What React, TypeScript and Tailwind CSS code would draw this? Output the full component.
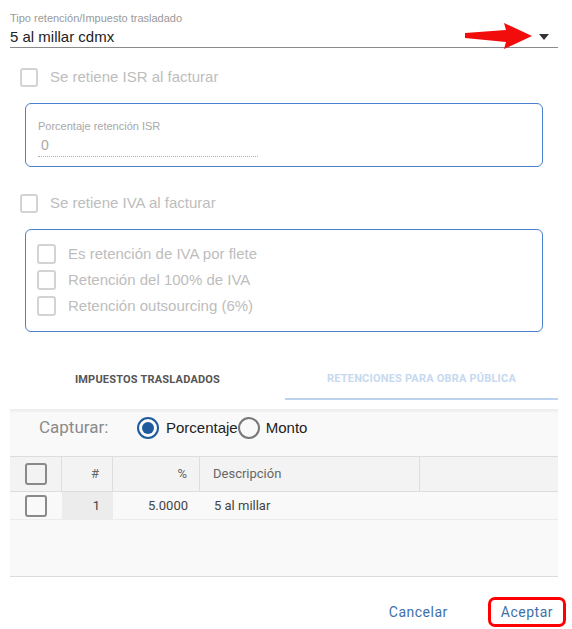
import React from "react";

const Box = ({ className = "", color = "border-[#d3d3d3]" }: { className?: string; color?: string }) => (
	<span className={`inline-block rounded-[3px] border-2 ${color} ${className}`} />
);

const CheckRow = ({ label }: { label: string }) => (
	<div className="flex items-center h-[26px]">
		<Box className="w-[19px] h-[20px]" />
		<span className="ml-[12px] text-[15px] text-[#bdbdbd]">{label}</span>
	</div>
);

const App = () => {
	return (
		<div className="w-[572px] h-[629px] bg-white font-['Liberation_Sans',Arial,sans-serif] relative overflow-hidden">
			{/* select */}
			<div className="pt-[12px] ml-[10px] w-[548px]">
				<div className="text-[11px] leading-[13px] text-[#9a9a9a]">Tipo retención/Impuesto trasladado</div>
				<div className="flex items-center justify-between border-b border-[#8a8a8a] h-[23px] pt-[2px]">
					<span className="text-[15px] text-[#222]">5 al millar cdmx</span>
					<svg width="12" height="8" viewBox="0 0 12 8" className="mr-[8px]">
						<path d="M1 1 L11 1 L6 7 Z" fill="#333" />
					</svg>
				</div>
			</div>
			{/* red arrow annotation */}
			<svg className="absolute left-[464px] top-[22px]" width="70" height="28" viewBox="0 0 70 28">
				<path d="M1 11 L42 8 L40 1 L68 14 L40 27 L42 20 L1 16 Z" fill="#f20d0d" />
			</svg>

			{/* ISR */}
			<div className="pl-[20px] mt-[18px] flex items-center h-[22px]">
				<Box className="w-[18px] h-[19px]" />
				<span className="ml-[12px] text-[15px] text-[#bdbdbd]">Se retiene ISR al facturar</span>
			</div>
			<div className="ml-[25px] mt-[15px] w-[518px] h-[64px] border border-[#4a7fcc] rounded-[6px] pl-[12px] pt-[16px]">
				<div className="text-[11px] leading-[12px] text-[#a8a8a8]">Porcentaje retención ISR</div>
				<div className="w-[220px] border-b border-dotted border-[#b0b0b0] pl-[3px] text-[14px] leading-[22px] text-[#a8a8a8] mt-[2px]">0</div>
			</div>

			{/* IVA */}
			<div className="pl-[20px] mt-[25px] flex items-center h-[22px]">
				<Box className="w-[18px] h-[19px]" />
				<span className="ml-[12px] text-[15px] text-[#bdbdbd]">Se retiene IVA al facturar</span>
			</div>
			<div className="ml-[25px] mt-[15px] w-[518px] h-[103px] border border-[#4a7fcc] rounded-[6px] pl-[11px] pt-[11px]">
				<CheckRow label="Es retención de IVA por flete" />
				<CheckRow label="Retención del 100% de IVA" />
				<CheckRow label="Retención outsourcing (6%)" />
			</div>

			{/* tabs */}
			<div className="mt-[28px] ml-[10px] w-[548px] flex font-['Roboto',sans-serif] font-bold text-[11px] tracking-[0.2px]">
				<div className="w-[275px] h-[40px] flex items-center justify-center text-[#555]">IMPUESTOS TRASLADADOS</div>
				<div className="flex-1 h-[40px] flex items-center justify-center text-[#c6d9f0] border-b-2 border-[#bdd2ed]">
					RETENCIONES PARA OBRA PÚBLICA
				</div>
			</div>

			{/* panel */}
			<div className="ml-[10px] w-[548px] h-[168px] mt-[9px] bg-[#f9f9f9] border-t border-[#ececec] border-b border-b-[#dcdcdc] shadow-[inset_0_2px_2px_rgba(0,0,0,0.04)]">
				<div className="flex items-center h-[36px] pl-[29px]">
					<span className="font-['Roboto',sans-serif] text-[17px] text-[#8a8a8a] w-[98px]">Capturar:</span>
					<span className="w-[22px] h-[22px] rounded-full border-2 border-[#1e5a9c] flex items-center justify-center">
						<span className="w-[12px] h-[12px] rounded-full bg-[#1e5a9c]" />
					</span>
					<span className="ml-[7px] text-[15px] text-[#222]">Porcentaje</span>
					<span className="w-[22px] h-[22px] rounded-full border-2 border-[#777]" />
					<span className="ml-[6px] text-[15px] text-[#222]">Monto</span>
				</div>
				<div className="mt-[10px] font-['Roboto',sans-serif] text-[13px]">
					<div className="flex h-[36px] bg-[#f3f3f3] border-y border-[#dddddd] text-[#666]">
						<div className="w-[52px] flex items-center justify-center border-r border-[#dddddd]">
							<Box className="w-[22px] h-[22px]" color="border-[#8a8a8a]" />
						</div>
						<div className="w-[51px] flex items-center justify-end pr-[13px] border-r border-[#dddddd]">#</div>
						<div className="w-[87px] flex items-center justify-end pr-[12px] border-r border-[#dddddd]">%</div>
						<div className="w-[220px] flex items-center pl-[13px] border-r border-[#dddddd]">Descripción</div>
						<div className="flex-1" />
					</div>
					<div className="flex h-[28px] border-b border-[#ececec] text-[#444]">
						<div className="w-[52px] flex items-center justify-center">
							<Box className="w-[22px] h-[22px]" color="border-[#8a8a8a]" />
						</div>
						<div className="w-[51px] flex items-center justify-end pr-[13px] bg-[#ececec]">1</div>
						<div className="w-[87px] flex items-center justify-end pr-[12px]">5.0000</div>
						<div className="w-[220px] flex items-center pl-[14px]">5 al millar</div>
					</div>
				</div>
			</div>

			{/* footer */}
			<div className="flex justify-end items-center mt-[20px] pr-[6px] font-['Roboto',sans-serif] text-[14px] text-[#3d70aa] tracking-[0.5px]">
				<span className="mr-[40px]">Cancelar</span>
				<span className="h-[30px] px-[10px] flex items-center border-[3px] border-[#f00] rounded-[7px]">Aceptar</span>
			</div>
		</div>
	);
};

export default App;
